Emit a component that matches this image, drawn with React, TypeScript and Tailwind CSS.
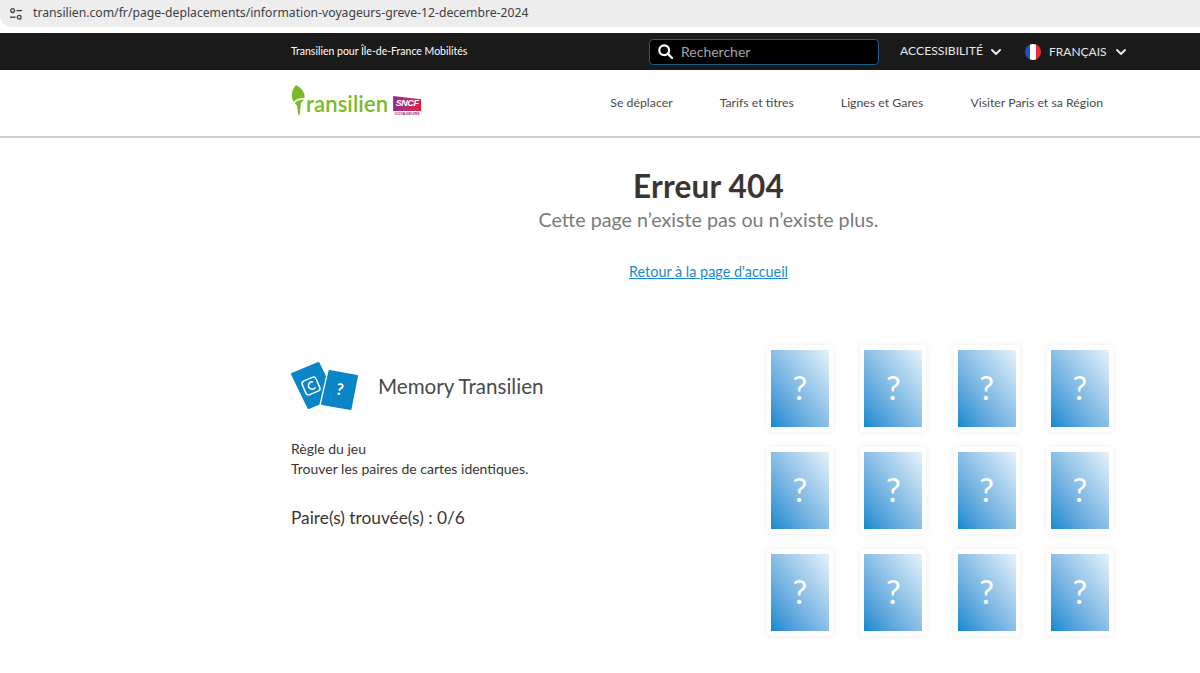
import { ChevronDown } from "lucide-react";

const cards = Array.from({ length: 12 }, (_, i) => i);

function SiteInfoIcon() {
  return (
    <svg width="14" height="14" viewBox="0 0 14 14" fill="none" stroke="#3c4043" strokeWidth="1.3">
      <circle cx="3.6" cy="3.6" r="1.9" />
      <path d="M7.5 3.6H13" />
      <path d="M1 10.2H6.5" />
      <circle cx="10.2" cy="10.2" r="1.9" />
    </svg>
  );
}

function SearchIcon() {
  return (
    <svg width="15" height="15" viewBox="0 0 15 15" fill="none" stroke="#fff" strokeWidth="2.2">
      <circle cx="6.2" cy="6.2" r="4.9" />
      <path d="M9.8 9.8L14 14" strokeLinecap="round" />
    </svg>
  );
}

function FrenchFlag() {
  return (
    <div className="flex w-[16px] h-[16px] rounded-full overflow-hidden">
      <div className="flex-1 bg-[#1f4fd0]" />
      <div className="flex-1 bg-white" />
      <div className="flex-1 bg-[#ef2b3c]" />
    </div>
  );
}

function Logo() {
  return (
    <div className="flex items-start w-[131px] h-[36px]">
      <svg width="15" height="31" viewBox="0 0 15 31" className="shrink-0">
        <path d="M5 0C2.200 3 .8 7 .8 10.500c0 2.700.8 4.800 2.200 6.500C4 14.500 8 13 13.500 13 14.500 8 10.500 3 5 0z" fill="#7ab929" />
        <path d="M3.800 18c2-2.300 5-3.300 9.500-3.500-1.800 1.300-3 2.500-3.500 4.500L8.700 30H7.300L6 20.500z" fill="#7ab929" />
      </svg>
      <span className="font-['Lato',sans-serif] text-[22px] leading-none text-[#7ab929] font-semibold mt-[8px] tracking-[0.1px]">
        ransilien
      </span>
      <div className="flex flex-col items-center ml-[5px] mt-[11px]">
        <div className="flex items-center justify-center w-[28px] h-[15px] bg-gradient-to-r from-[#8f2a8c] to-[#e8183f] [clip-path:polygon(0_0,100%_22%,100%_100%,0_100%)]">
          <span className="font-['Liberation_Sans',sans-serif] italic font-bold text-[9px] leading-none text-white tracking-[-0.4px]">
            SNCF
          </span>
        </div>
        <span className="font-['Liberation_Sans',sans-serif] font-bold text-[4px] leading-[6px] text-[#a3257f]">
          VOYAGEURS
        </span>
      </div>
    </div>
  );
}

function MemoryIcon() {
  return (
    <svg width="68" height="50" viewBox="0 0 68 50" className="shrink-0">
      <polygon points="1,13 27.500,2 44,36 17.500,47" fill="#0a85c7" stroke="#0a85c7" strokeWidth="2" strokeLinejoin="round" />
      <g transform="rotate(-23 20 25)">
        <rect x="12.500" y="17.500" width="15" height="15" rx="3" fill="none" stroke="#fff" strokeWidth="1.500" />
        <path d="M23.500 22a3.700 3.700 0 1 0 0 6" fill="none" stroke="#fff" strokeWidth="1.500" />
      </g>
      <polygon points="38.500,9 66.500,14 60,48.500 30.500,43.500" fill="#0a85c7" stroke="#fff" strokeWidth="4" strokeLinejoin="round" />
      <polygon points="38.500,10 66,15 59.500,48 31,43" fill="#0a85c7" stroke="#0a85c7" strokeWidth="2" strokeLinejoin="round" />
      <text x="49" y="34" textAnchor="middle" fill="#fff" fontSize="16" fontWeight="700" fontFamily="Lato, sans-serif" transform="rotate(10 49 28)">
        ?
      </text>
    </svg>
  );
}

function MemoryCard() {
  return (
    <div className="w-[66px] h-[87px] px-[4px] py-[5px] bg-white rounded-[4px] shadow-[0_0_6px_rgba(0,0,0,0.08)]">
      <div className="w-full h-full bg-gradient-to-tr from-[#0089d0] to-[#e6f2f9] flex items-center justify-center pb-[3px]">
        <span className="font-['Lato',sans-serif] text-[33px] leading-none text-white">?</span>
      </div>
    </div>
  );
}

export default function App() {
  return (
    <div className="w-[1200px] h-[673px] overflow-hidden bg-white font-['Lato',sans-serif] text-[#3a3533]">
      <div className="h-[27px] bg-[#eeedee] flex items-center pl-[9px] gap-[10px] rounded-bl-[12px]">
        <SiteInfoIcon />
        <span className="font-['Noto_Sans',sans-serif] text-[12.2px] text-[#3c4043] leading-none">
          transilien.com/fr/page-deplacements/information-voyageurs-greve-12-decembre-2024
        </span>
      </div>
      <div className="h-[6px]" />

      <div className="h-[37px] bg-[#1a1a1a] flex items-center text-white">
        <div className="w-[649px] shrink-0 pl-[291px] whitespace-nowrap text-[10.500px]">
          Transilien pour Île-de-France Mobilités
        </div>
        <div className="w-[230px] h-[26px] flex items-center gap-[8px] pl-[8px] pb-[1px] bg-black border border-[#1b5f87] rounded-[4px]">
          <SearchIcon />
          <span className="text-[14px] text-[#a3a3a3]">Rechercher</span>
        </div>
        <span className="ml-[21px] text-[12.200px] text-[#e8e8e8]">ACCESSIBILITÉ</span>
        <ChevronDown size={16} strokeWidth={3} className="ml-[5px] text-[#e8e8e8]" />
        <div className="ml-[21px]">
          <FrenchFlag />
        </div>
        <span className="ml-[8px] text-[12px] text-[#e8e8e8]">FRANÇAIS</span>
        <ChevronDown size={16} strokeWidth={3} className="ml-[6px] text-[#e8e8e8]" />
      </div>

      <div className="h-[68px] border-b-2 border-[#cfcfcf] flex items-center pl-[291px] pr-[97px] justify-between">
        <Logo />
        <nav className="flex items-center gap-[47px] text-[12.300px] text-[#4a4a4a]">
          <span>Se déplacer</span>
          <span>Tarifs et titres</span>
          <span>Lignes et Gares</span>
          <span>Visiter Paris et sa Région</span>
        </nav>
      </div>

      <div className="flex flex-col items-center pl-[217px] pt-[29px]">
        <h1 className="text-[31.500px] leading-[38px] font-bold text-[#3a3533] tracking-[0.2px]">Erreur 404</h1>
        <p className="text-[19.700px] leading-[28px] text-[#7a7a7a] mt-[1px]">Cette page n’existe pas ou n’existe plus.</p>
        <a className="mt-[28px] text-[14.400px] leading-[20px] text-[#1a8ccc] underline">Retour à la page d'accueil</a>
      </div>

      <div className="flex pl-[291px] pt-[63px]">
        <div className="w-[476px] pt-[16px]">
          <div className="flex items-center gap-[19px] h-[50px]">
            <MemoryIcon />
            <span className="text-[20.600px] text-[#4a4a4a]">Memory Transilien</span>
          </div>
          <p className="mt-[28px] text-[14px] leading-[20px] text-[#3a3533]">Règle du jeu</p>
          <p className="text-[14px] leading-[20px] text-[#3a3533]">Trouver les paires de cartes identiques.</p>
          <p className="mt-[27px] text-[17.300px] leading-[24px] text-[#3a3533]">Paire(s) trouvée(s) : 0/6</p>
        </div>
        <div className="grid grid-cols-4 gap-x-[27.300px] gap-y-[15px]">
          {cards.map((c) => (
            <MemoryCard key={c} />
          ))}
        </div>
      </div>
    </div>
  );
}
